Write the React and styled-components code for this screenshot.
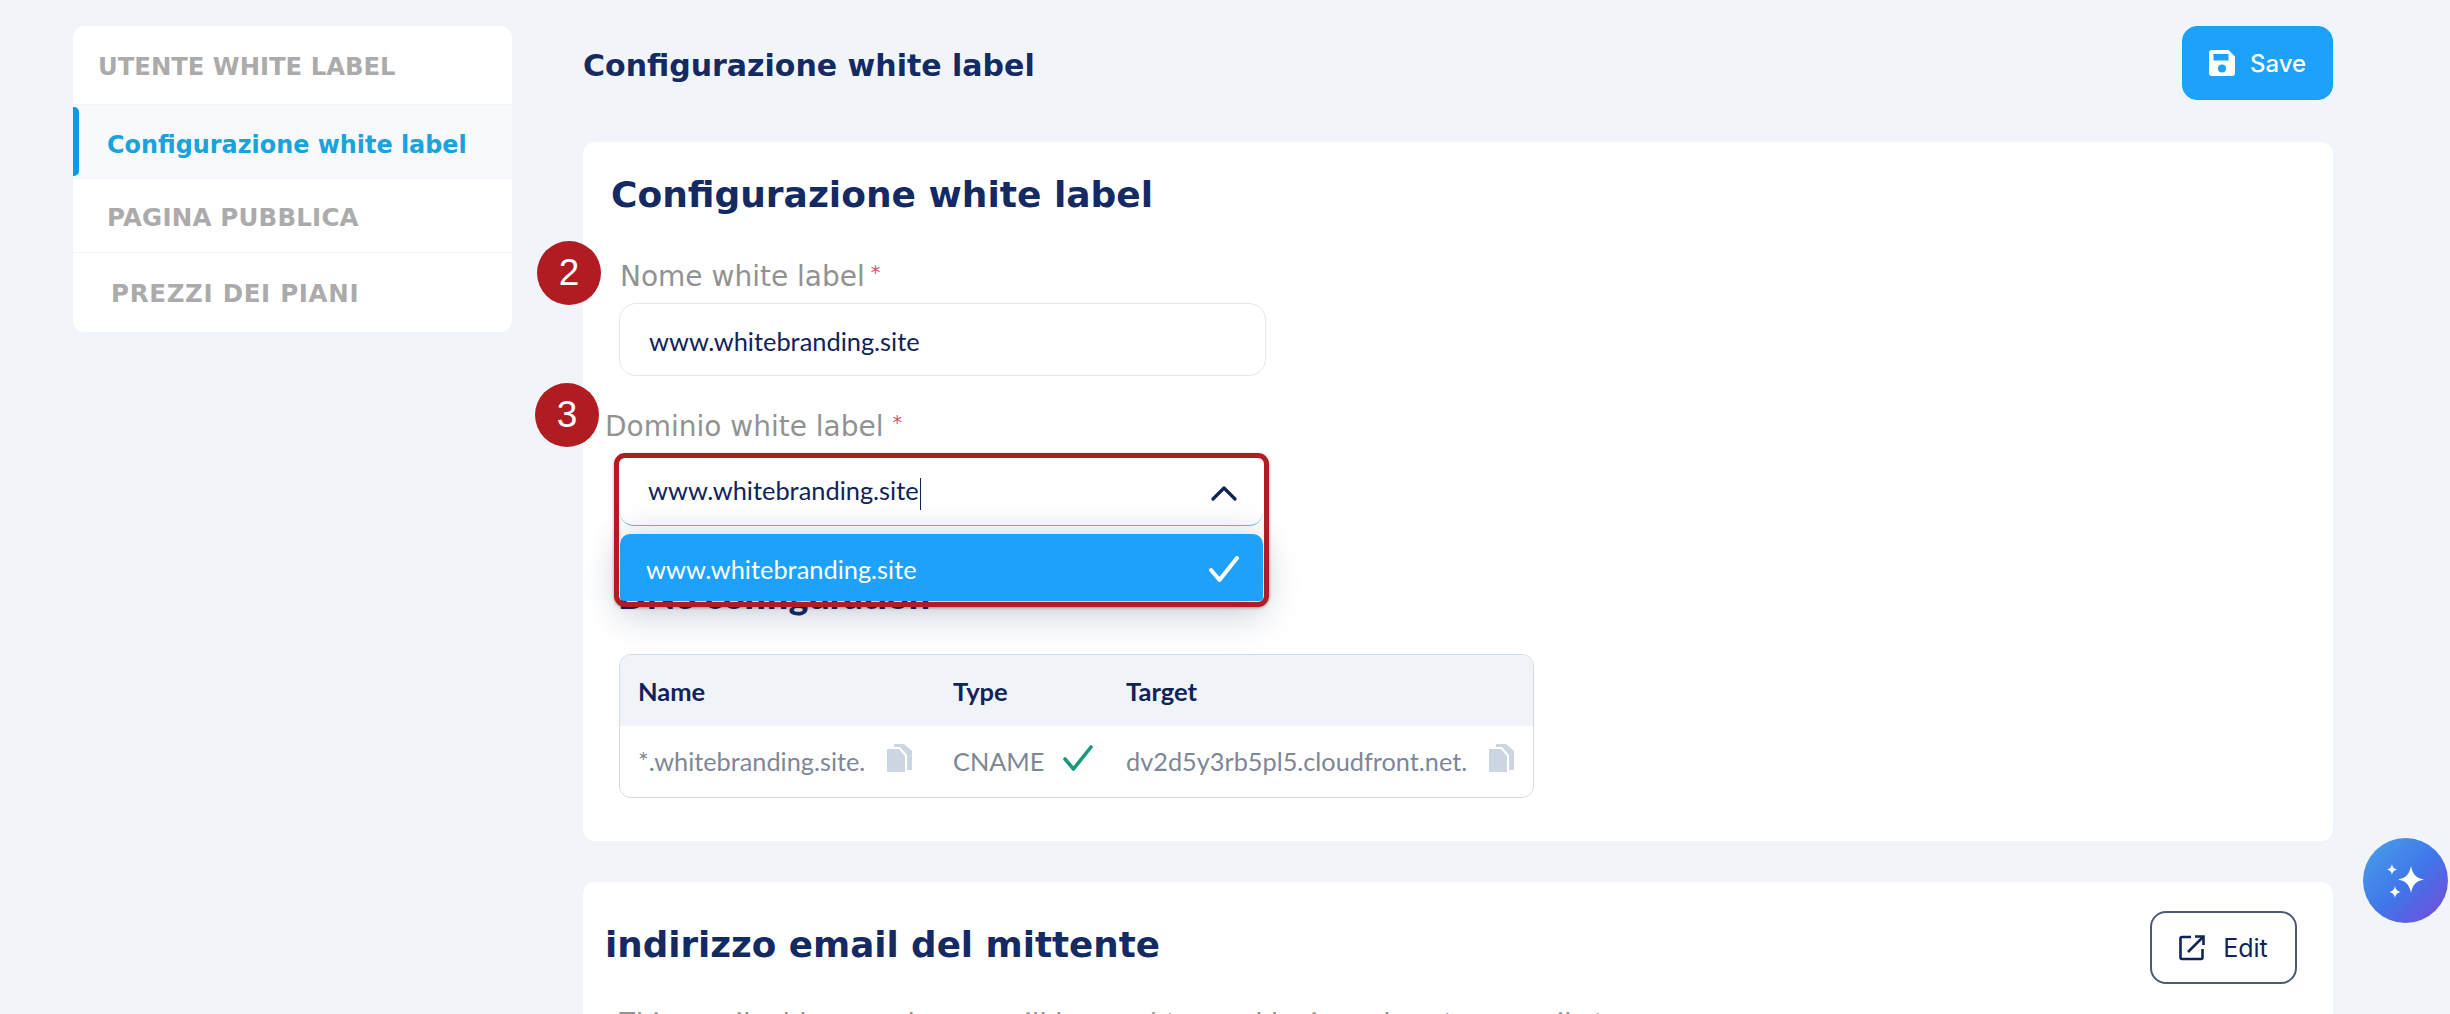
import React from "react";
import styled, { createGlobalStyle } from "styled-components";

const Global = createGlobalStyle`
  html, body { margin: 0; padding: 0; background: #f1f4f9; }
  * { box-sizing: border-box; }
`;
const NAVY = "#142a63";
const UI = `"DejaVu Sans", Verdana, sans-serif`;
const GEO = `Lato, "Open Sans", sans-serif`;

const Page = styled.div`
  position: relative; width: 2450px; height: 1014px; overflow: hidden;
  display: flex; gap: 71px; padding: 26px 117px 0 73px; background: #f1f4f9;
`;
const Sidebar = styled.nav`
  width: 439px; height: 306px; flex: none; background: #fff; border-radius: 12px; overflow: hidden;
  display: flex; flex-direction: column; font-family: ${UI}; font-weight: 700;
`;
const SideRow = styled.div`
  position: relative; height: ${p => p.$h}px; flex: none; display: flex; align-items: center;
  padding: ${p => p.$top}px 0 0 ${p => p.$pad}px; font-size: ${p => p.$size}px;
  letter-spacing: ${p => p.$track || 0}px;
  color: ${p => (p.$active ? "#18a3dc" : "#ababab")};
  background: ${p => (p.$active ? "#f7f9fc" : "#fff")};
  border-bottom: ${p => (p.$last ? "none" : "1px solid #f2f4f8")};
  ${p => p.$active && `&::before { content: ""; position: absolute; left: 0; top: 2px; bottom: 2px; width: 6px; background: #0d98ea; border-radius: 0 5px 5px 0; }`}
`;
const Main = styled.main`
  width: 1750px; flex: none; display: flex; flex-direction: column;
`;
const Header = styled.header`
  height: 74px; flex: none; margin-bottom: 42px; display: flex; align-items: center; justify-content: space-between;
`;
const PageTitle = styled.h1`
  margin: 4px 0 0; font: 700 30px ${UI}; color: ${NAVY};
`;
const SaveButton = styled.button`
  width: 151px; height: 74px; border: 1px solid #17a0ef; border-radius: 15px; background: #1da1fb;
  display: flex; align-items: center; justify-content: center; gap: 15px; color: #fff;
  font: 500 24px Inter, sans-serif; padding: 0;
`;
const Card = styled.section`
  position: relative; flex: none; background: #fff; border-radius: 12px;
  height: ${p => p.$h}px; margin-bottom: 41px; padding: ${p => p.$pad};
`;
const CardTitle = styled.h2`
  margin: 1px 0 37px -8px; height: 40px; font: 700 36px/40px ${UI}; color: ${NAVY}; white-space: nowrap;
`;
const Label = styled.div`
  height: 40px; font: 400 28px/40px ${UI}; color: #929292;
  margin: ${p => p.$margin};
  white-space: nowrap;
`;
const Star = styled.span`
  color: #e9486b; font-size: 19px; vertical-align: 7px; margin-left: ${p => p.$gap}px;
`;
const Input = styled.div`
  width: 647px; height: 73px; border: 1.5px solid #e3e6eb; border-radius: 17px; background: #fff;
  display: flex; align-items: center; padding: 2px 0 0 29px;
  font: 400 25.4px ${GEO}; color: #10235a;
`;
const Combo = styled.div`
  position: relative; width: 643px; height: 68px; margin-left: 1px; margin-bottom: 128px;
  z-index: 3;
`;
const Trigger = styled.div`
  height: 68px; background: #fff; border-bottom: 1.5px solid #6cb9d6; border-radius: 0 0 14px 14px;
  display: flex; align-items: center; justify-content: space-between; padding: 2px 26px 0 28px;
  font: 400 25.4px ${GEO}; color: #10235a;
`;
const Caret = styled.span`
  display: inline-block; width: 1.5px; height: 32px; background: #10235a; vertical-align: middle; margin-left: 1px;
`;
const Menu = styled.div`
  position: absolute; left: 0; right: 0; top: 76px; height: 67px; background: #1da1fb; border-radius: 10px 10px 4px 4px;
  display: flex; align-items: center; justify-content: space-between; padding: 2px 24px 0 26px;
  font: 400 25.4px ${GEO}; color: #fff;
  box-shadow: 0 14px 36px rgba(20,40,80,.22), 0 -8px 30px rgba(20,40,80,.08);
`;
const Highlight = styled.div`
  position: absolute; left: -6px; right: -6px; top: -5px; height: 154px; border: 5.5px solid #b01c22; border-radius: 11px;
  box-shadow: 0 1px 3px rgba(0,0,0,.35); pointer-events: none;
`;
const Badge = styled.div`
  position: absolute; left: ${p => p.$x}px; top: ${p => p.$y}px; width: 64px; height: 64px; border-radius: 50%;
  background: #b01c22; color: #fff; display: flex; align-items: center; justify-content: center;
  font: 400 37px "Liberation Sans", Arial, sans-serif; z-index: 4;
`;
const DnsTitle = styled.h3`
  position: absolute; left: 35px; top: 433px; margin: 0; font: 900 37.5px/40px ${GEO}; color: ${NAVY}; white-space: nowrap;
`;
const Table = styled.div`
  width: 915px; height: 144px; border: 1.5px solid #d3d9e2; border-radius: 12px; overflow: hidden; background: #fff;
`;
const TableRow = styled.div`
  height: ${p => p.$h}px; display: grid; grid-template-columns: 315px 173px 1fr; align-items: center;
  padding-left: 18px; background: ${p => p.$head ? "#f0f3f8" : "#fff"};
`;
const Th = styled.div`
  font: 700 25.5px ${GEO}; color: #10235a;
`;
const Td = styled.div`
  display: flex; align-items: center; font: 400 25.3px ${GEO}; color: #7d8797; white-space: nowrap;
`;
const CellIcon = styled.span`
  display: inline-flex; margin-left: ${p => p.$gap}px; margin-top: -6px;
`;
const Cardhead = styled.div`
  display: flex; align-items: center; justify-content: space-between; padding-top: 29px; margin-left: -14px;
`;
const SectionTitle = styled.h2`
  margin: -6px 0 0; font: 700 35.7px/40px ${UI}; color: ${NAVY}; white-space: nowrap;
`;
const EditButton = styled.button`
  width: 147px; height: 73px; border: 2px solid #4d5a75; border-radius: 16px; background: #fff; padding: 0;
  display: flex; align-items: center; justify-content: center; gap: 18px; color: #10235a; font: 400 25px Inter, sans-serif;
`;
const Note = styled.p`
  margin: 23px 0 0; font: 400 28px/30px ${GEO}; letter-spacing: 0.9px; color: #969696; white-space: nowrap;
`;
const Fab = styled.div`
  position: absolute; left: 2363px; top: 838px; width: 85px; height: 85px; border-radius: 50%;
  background: linear-gradient(135deg, #4aa3e9 0%, #3f76ea 52%, #7a48d8 100%);
  display: flex; align-items: center; justify-content: center;
`;

const SaveIcon = () => (
  <svg width="26" height="26" viewBox="0 0 26 26"><path fill="#fff" fillRule="evenodd" d="M3 0h16.500L26 6.500V23a3 3 0 0 1-3 3H3a3 3 0 0 1-3-3V3a3 3 0 0 1 3-3zM4.500 4v6.500h15V4zM13 14.500a4 4 0 1 0 0 8 4 4 0 0 0 0-8z"/></svg>
);
const Chevron = () => (
  <svg width="26" height="16" viewBox="0 0 26 16"><path d="M2 14 13 3l11 11" fill="none" stroke="#10235a" strokeWidth="3.200" strokeLinecap="round" strokeLinejoin="round"/></svg>
);
const Check = ({ w, h, color, sw }) => (
  <svg width={w} height={h} viewBox="0 0 30 26"><path d="M2 14l8.500 10L28 2" fill="none" stroke={color} strokeWidth={sw} strokeLinecap="round" strokeLinejoin="round"/></svg>
);
const CopyIcon = () => (
  <svg width="25" height="28" viewBox="0 0 25 28"><path fill="#ccd5e2" d="M0 5h12l6 7v16H0z"/><path fill="#ccd5e2" d="M7 0h10l8 7v19h-5V11l-7-8H7z"/></svg>
);
const EditIcon = () => (
  <svg width="26" height="26" viewBox="0 0 26 26" fill="none" stroke="#10235a" strokeWidth="2.600"><path d="M12 2H3a1.500 1.500 0 0 0-1.500 1.500v19A1.500 1.500 0 0 0 3 24h19a1.500 1.500 0 0 0 1.500-1.500V14"/><path d="M9 17 24 2M16 1.500h8.500V10"/></svg>
);
const Sparkles = () => (
  <svg width="37" height="34" viewBox="0 0 37 34" fill="#fff">
    <path d="M24 2C25.500 10 29 14 37 15.500 29 17 25.500 21 24 29 22.500 21 19 17 11 15.500 19 14 22.500 10 24 2z"/>
    <path d="M5 0C5.600 3.400 7 4.900 10.500 5.500 7 6.100 5.600 7.600 5 11 4.400 7.600 3 6.100-.5 5.500 3 4.900 4.400 3.400 5 0z"/>
    <path d="M8 22C8.700 25.700 10.300 27.300 14 28 10.300 28.700 8.700 30.300 8 34 7.300 30.300 5.700 28.700 2 28 5.700 27.300 7.300 25.700 8 22z"/>
  </svg>
);

export default function App() {
  return (
    <>
      <Global />
      <Page>
        <Sidebar>
          <SideRow $h={79} $pad={25} $top={3} $size={24.3}>UTENTE WHITE LABEL</SideRow>
          <SideRow $h={74} $pad={34} $top={6} $size={23.9} $active>Configurazione white label</SideRow>
          <SideRow $h={74} $pad={34} $top={3} $size={24.5} $track={0.2}>PAGINA PUBBLICA</SideRow>
          <SideRow $h={79} $pad={38} $top={1} $size={24.5} $track={0.7} $last>PREZZI DEI PIANI</SideRow>
        </Sidebar>
        <Main>
          <Header>
            <PageTitle>Configurazione white label</PageTitle>
            <SaveButton><SaveIcon />Save</SaveButton>
          </Header>
          <Card $h={699} $pad="32px 0 0 36px">
            <Badge $x={-46} $y={99}>2</Badge>
            <Badge $x={-48} $y={241}>3</Badge>
            <CardTitle>Configurazione white label</CardTitle>
            <Label $margin="0 0 11px 1px">Nome white label<Star $gap={6}>*</Star></Label>
            <Input>www.whitebranding.site</Input>
            <Label $margin="26px 0 16px -14px">Dominio white label<Star $gap={9}>*</Star></Label>
            <DnsTitle>DNS configuration</DnsTitle>
            <Combo>
              <Trigger>
                <span>www.whitebranding.site<Caret /></span>
                <Chevron />
              </Trigger>
              <Menu>
                www.whitebranding.site
                <Check w={30} h={26} color="#fff" sw={4} />
              </Menu>
              <Highlight />
            </Combo>
            <Table>
              <TableRow $h={71} $head>
                <Th>Name</Th><Th>Type</Th><Th>Target</Th>
              </TableRow>
              <TableRow $h={70}>
                <Td>*.whitebranding.site.<CellIcon $gap={22}><CopyIcon /></CellIcon></Td>
                <Td>CNAME<CellIcon $gap={19}><Check w={30} h={26} color="#159a7c" sw={3.6} /></CellIcon></Td>
                <Td>dv2d5y3rb5pl5.cloudfront.net.<CellIcon $gap={22}><CopyIcon /></CellIcon></Td>
              </TableRow>
            </Table>
          </Card>
          <Card $h={300} $pad="0 36px 0 36px">
            <Cardhead>
              <SectionTitle>indirizzo email del mittente</SectionTitle>
              <EditButton><EditIcon />Edit</EditButton>
            </Cardhead>
            <Note>This email address and name will be used to send login and custom emails to your users.</Note>
          </Card>
        </Main>
        <Fab><Sparkles /></Fab>
      </Page>
    </>
  );
}
